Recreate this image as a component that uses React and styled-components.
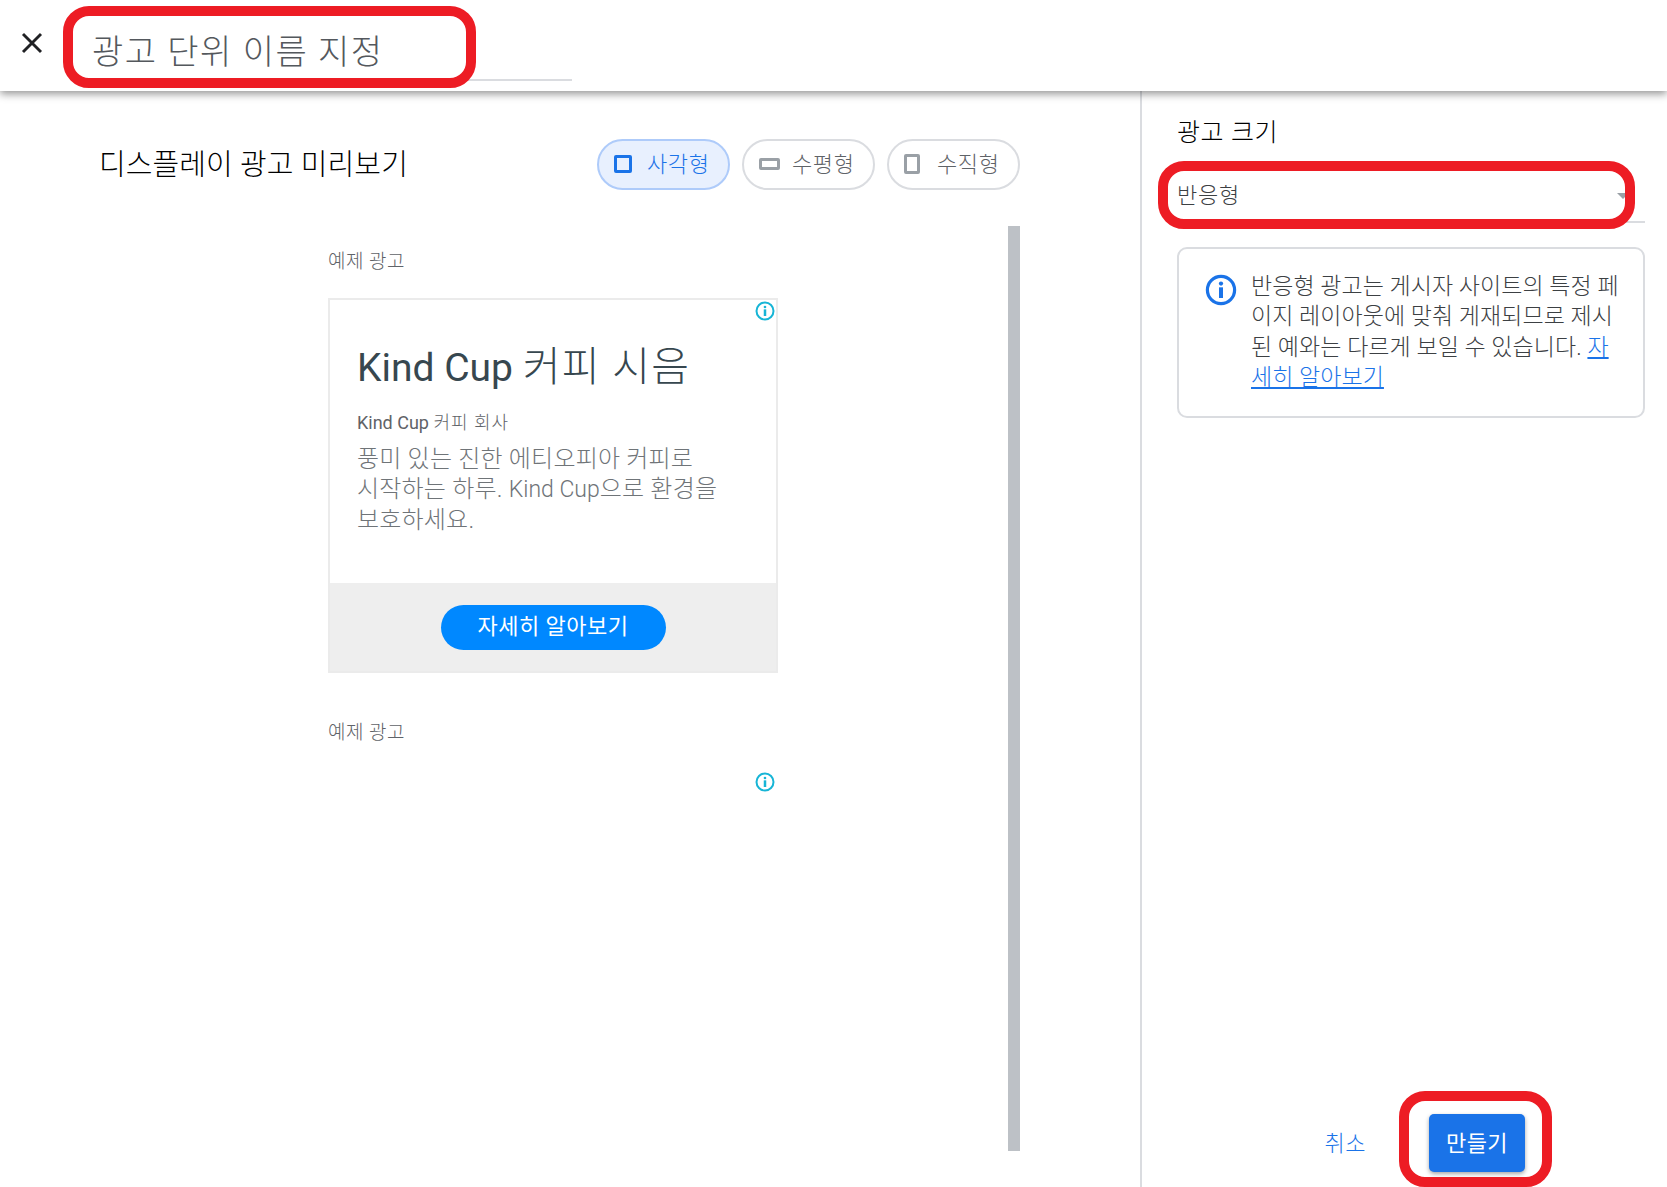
import React from "react";
import styled, { createGlobalStyle } from "styled-components";

const Global = createGlobalStyle`
  html, body { margin: 0; padding: 0; background: #fff; }
  body { font-family: Roboto, "Noto Sans CJK KR", "Liberation Sans", sans-serif; }
  * { box-sizing: border-box; }
`;

const Page = styled.div`
  position: relative;
  width: 1667px;
  height: 1187px;
  overflow: hidden;
  display: flex;
  flex-direction: column;
`;

const Header = styled.header`
  position: relative;
  z-index: 2;
  flex: 0 0 91px;
  display: flex;
  align-items: flex-start;
  background: #fff;
  box-shadow: 0 3px 8px rgba(0, 0, 0, 0.42);
  padding: 30px 0 0 19px;
`;

const CloseButton = styled.button`
  width: 26px;
  height: 26px;
  padding: 0;
  border: 0;
  background: none;
  color: #202124;
  display: flex;
  margin-right: 47px;
`;

const NameField = styled.div`
  width: 480px;
  height: 51px;
  border-bottom: 2px solid #dadce0;
  font-size: 34px;
  font-weight: 300;
  line-height: 42px;
  color: #54585d;
  letter-spacing: 1.5px;
  padding-top: 1px;
`;

const Body = styled.main`
  flex: 1;
  display: flex;
  min-height: 0;
`;

const Left = styled.section`
  width: 1140px;
  display: flex;
  flex-direction: column;
  padding: 48px 120px 0 99px;
`;

const LeftTop = styled.div`
  display: flex;
  align-items: center;
  justify-content: space-between;
  height: 51px;
`;

const PreviewTitle = styled.h2`
  margin: 0 0 6px;
  font-weight: 300;
  font-size: 29px;
  color: #000;
  letter-spacing: 0.1px;
`;

const Chips = styled.div`
  display: flex;
  gap: 12px;
`;

const Chip = styled.div`
  width: 133px;
  height: 51px;
  border-radius: 26px;
  border: 2px solid ${(p) => (p.$active ? "#aecbfa" : "#dadce0")};
  background: ${(p) => (p.$active ? "#e8f0fe" : "#fff")};
  color: ${(p) => (p.$active ? "#1a73e8" : "#5f6368")};
  display: flex;
  align-items: center;
  padding: 0 0 5px 15px;
  font-size: 22px;
  font-weight: 300;
  letter-spacing: 0.6px;
`;

const ChipIconSlot = styled.span`
  width: 33px;
  display: flex;
  align-items: center;
  justify-content: flex-start;
  position: relative;
  top: 2px;
`;

const ShapeIcon = styled.span`
  display: block;
  width: ${(p) => p.$w}px;
  height: ${(p) => p.$h}px;
  border: 3px solid ${(p) => (p.$active ? "#1a73e8" : "#9aa0a6")};
  border-radius: 2px;
`;

const PreviewArea = styled.div`
  display: flex;
  margin-top: 36px;
  height: 925px;
  padding-left: 229px;
`;

const PreviewScroll = styled.div`
  width: 680px;
  flex: none;
`;

const ScrollThumb = styled.div`
  width: 12px;
  height: 925px;
  background: #bdc1c6;
`;

const AdBlock = styled.div`
  width: 450px;
  margin-bottom: ${(p) => p.$mb || 0}px;
`;

const AdLabel = styled.div`
  font-size: 19px;
  font-weight: 300;
  line-height: 24px;
  color: #5f6368;
  margin: 24px 0 24px;
  letter-spacing: 0.5px;
`;

const AdCard = styled.article`
  position: relative;
  width: 450px;
  height: 375px;
  border: 2px solid #ebebeb;
  display: flex;
  flex-direction: column;
`;

const AdInfo = styled.span`
  position: absolute;
  top: ${(p) => p.$top}px;
  right: ${(p) => p.$right}px;
  display: flex;
`;

const EmptyAd = styled.div`
  position: relative;
  width: 450px;
  height: 60px;
`;

const AdContent = styled.div`
  flex: 0 0 283px;
  padding: 43px 20px 0 27px;
`;

const AdTitle = styled.div`
  font-size: 39px;
  line-height: 48px;
  color: #37474f;
  white-space: nowrap;
`;

const AdTitleKo = styled.span`
  font-size: 41px;
  font-weight: 300;
  letter-spacing: 1.4px;
`;

const AdCompany = styled.div`
  font-size: 18px;
  line-height: 24px;
  color: #5f6368;
  margin-top: 19px;
`;

const AdCompanyKo = styled.span`
  font-weight: 300;
  letter-spacing: 1px;
`;

const AdText = styled.div`
  font-size: 24px;
  font-weight: 300;
  line-height: 30.2px;
  color: #6f7478;
  margin-top: 9px;
  letter-spacing: 0.2px;
  white-space: nowrap;
`;

const AdTextLatin = styled.span`
  font-size: 23px;
  letter-spacing: 0;
`;

const AdFooter = styled.div`
  flex: 1;
  background: #eeeeee;
  display: flex;
  align-items: center;
  justify-content: center;
`;

const AdButton = styled.div`
  width: 225px;
  height: 45px;
  border-radius: 23px;
  background: #0088ff;
  color: #fff;
  font-size: 22px;
  letter-spacing: 0.5px;
  line-height: 43px;
  text-align: center;
`;

const Right = styled.aside`
  flex: 1;
  border-left: 2px solid #dadce0;
  padding: 24px 22px 0 35px;
  display: flex;
  flex-direction: column;
`;

const SizeTitle = styled.h2`
  margin: 0;
  font-weight: 300;
  font-size: 25px;
  line-height: 36px;
  color: #000;
  letter-spacing: 0.6px;
`;

const SelectField = styled.div`
  height: 65px;
  margin-top: 7px;
  padding-top: 23px;
  border-bottom: 2px solid #dadce0;
  font-size: 22px;
  font-weight: 300;
  letter-spacing: 0.7px;
  line-height: 30px;
  color: #3c4043;
  position: relative;

  &::after {
    content: "";
    position: absolute;
    right: 16px;
    top: 35px;
    border-left: 6px solid transparent;
    border-right: 6px solid transparent;
    border-top: 6px solid #9aa0a6;
  }
`;

const InfoBox = styled.div`
  margin-top: 24px;
  height: 171px;
  border: 2px solid #dadce0;
  border-radius: 10px;
  display: flex;
  padding: 23px 20px 0 26px;
`;

const InfoIconSlot = styled.span`
  flex: 0 0 46px;
  padding-top: 2px;
  display: flex;
  align-items: flex-start;
`;

const InfoText = styled.p`
  margin: 0;
  font-size: 23px;
  font-weight: 300;
  line-height: 30.3px;
  color: #3c4043;
  letter-spacing: 0.05px;
  word-break: break-all;
`;

const LearnLink = styled.a`
  color: #1a73e8;
  text-decoration: underline;
`;

const Actions = styled.div`
  margin-top: auto;
  display: flex;
  align-items: center;
  justify-content: flex-end;
  padding: 0 120px 15px 0;
`;

const CancelButton = styled.span`
  color: #1a73e8;
  font-size: 22px;
  font-weight: 300;
  letter-spacing: 0.5px;
  margin: 0 63px 4px 0;
`;

const CreateButton = styled.span`
  width: 96px;
  height: 58px;
  background: #1a73e8;
  color: #fff;
  font-size: 22px;
  letter-spacing: 0.4px;
  border-radius: 5px;
  display: flex;
  align-items: center;
  justify-content: center;
  padding-bottom: 4px;
  box-shadow: 0 2px 4px rgba(0, 0, 0, 0.35);
`;

const Highlight = styled.div`
  position: absolute;
  z-index: 5;
  left: ${(p) => p.$x}px;
  top: ${(p) => p.$y}px;
  width: ${(p) => p.$w}px;
  height: ${(p) => p.$h}px;
  border: 10px solid #ed1c24;
  border-radius: 26px;
  pointer-events: none;
`;

const CircleInfo = ({ size, color, sw }) => (
  <svg width={size} height={size} viewBox="0 0 24 24" fill="none">
    <circle cx="12" cy="12" r="10.2" stroke={color} strokeWidth={sw} />
    <circle cx="12" cy="7.2" r="1.6" fill={color} />
    <rect x="10.5" y="10" width="3" height="8" fill={color} />
  </svg>
);

const Close = () => (
  <svg width="26" height="26" viewBox="0 0 26 26" fill="none">
    <path d="M4 4 L22 22 M22 4 L4 22" stroke="currentColor" strokeWidth="2.9" />
  </svg>
);

export default function App() {
  return (
    <Page>
      <Global />
      <Header>
        <CloseButton aria-label="close"><Close /></CloseButton>
        <NameField>광고 단위 이름 지정</NameField>
      </Header>
      <Body>
        <Left>
          <LeftTop>
            <PreviewTitle>디스플레이 광고 미리보기</PreviewTitle>
            <Chips>
              <Chip $active>
                <ChipIconSlot><ShapeIcon $active $w={18} $h={18} /></ChipIconSlot>
                사각형
              </Chip>
              <Chip>
                <ChipIconSlot><ShapeIcon $w={21} $h={12} /></ChipIconSlot>
                수평형
              </Chip>
              <Chip>
                <ChipIconSlot><ShapeIcon $w={16} $h={20} /></ChipIconSlot>
                수직형
              </Chip>
            </Chips>
          </LeftTop>
          <PreviewArea>
            <PreviewScroll>
              <AdBlock $mb={48}>
                <AdLabel>예제 광고</AdLabel>
                <AdCard>
                  <AdInfo $top={1} $right={1}><CircleInfo size={20} color="#17b5d6" sw={2.4} /></AdInfo>
                  <AdContent>
                    <AdTitle>Kind Cup <AdTitleKo>커피 시음</AdTitleKo></AdTitle>
                    <AdCompany>Kind Cup <AdCompanyKo>커피 회사</AdCompanyKo></AdCompany>
                    <AdText>
                      풍미 있는 진한 에티오피아 커피로<br />
                      시작하는 하루. <AdTextLatin>Kind Cup</AdTextLatin>으로 환경을<br />
                      보호하세요.
                    </AdText>
                  </AdContent>
                  <AdFooter><AdButton>자세히 알아보기</AdButton></AdFooter>
                </AdCard>
              </AdBlock>
              <AdBlock>
                <AdLabel>예제 광고</AdLabel>
                <EmptyAd>
                  <AdInfo $top={3} $right={3}><CircleInfo size={20} color="#17b5d6" sw={2.4} /></AdInfo>
                </EmptyAd>
              </AdBlock>
            </PreviewScroll>
            <ScrollThumb />
          </PreviewArea>
        </Left>
        <Right>
          <SizeTitle>광고 크기</SizeTitle>
          <SelectField>반응형</SelectField>
          <InfoBox>
            <InfoIconSlot><CircleInfo size={32} color="#1a73e8" sw={2.4} /></InfoIconSlot>
            <InfoText>
              반응형 광고는 게시자 사이트의 특정 페이지 레이아웃에 맞춰 게재되므로 제시된 예와는 다르게 보일 수 있습니다.{" "}
              <LearnLink>자세히 알아보기</LearnLink>
            </InfoText>
          </InfoBox>
          <Actions>
            <CancelButton>취소</CancelButton>
            <CreateButton>만들기</CreateButton>
          </Actions>
        </Right>
      </Body>
      <Highlight $x={63} $y={6} $w={413} $h={82} />
      <Highlight $x={1158} $y={161} $w={477} $h={68} />
      <Highlight $x={1399} $y={1091} $w={153} $h={96} />
    </Page>
  );
}
